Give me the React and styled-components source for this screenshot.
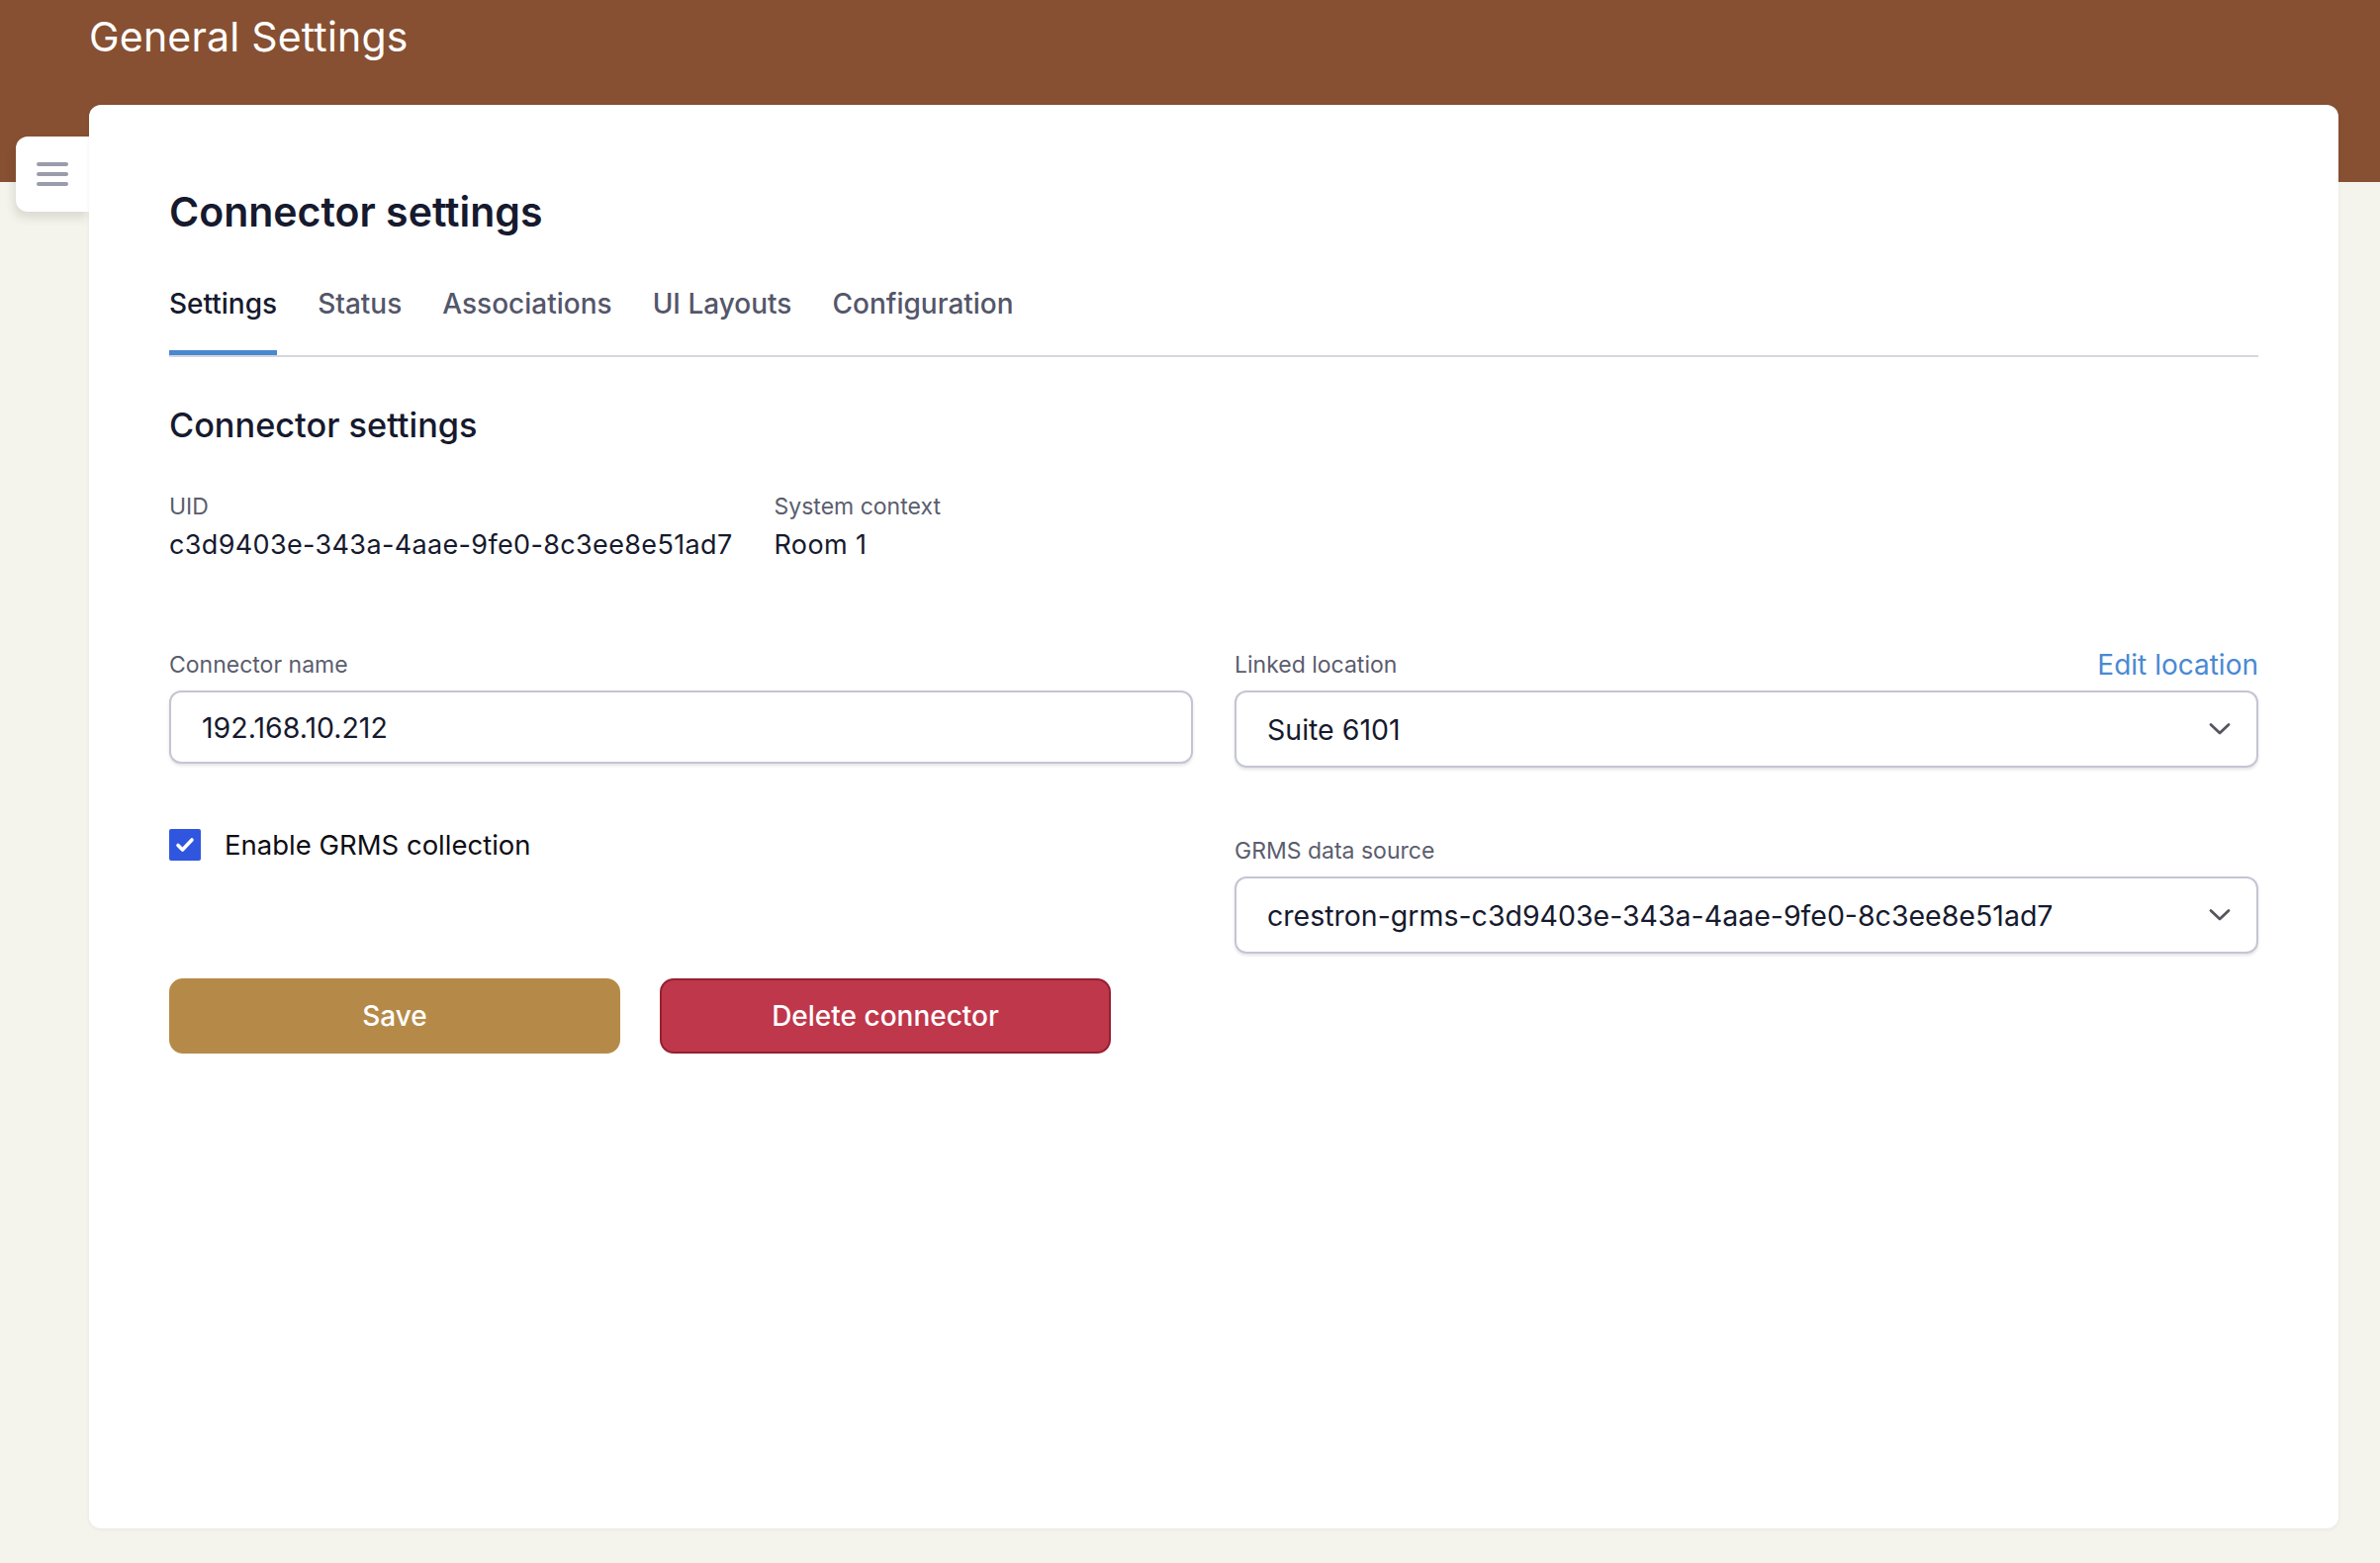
import React from 'react';
import styled, { createGlobalStyle } from 'styled-components';

const GlobalStyle = createGlobalStyle`
  * {
    box-sizing: border-box;
  }
  body {
    margin: 0;
    font-family: Inter, 'Noto Sans', 'Liberation Sans', sans-serif;
    background: #f4f4ec;
  }
`;

const Page = styled.div`
  min-height: 1580px;
  background: linear-gradient(to bottom, #875032 0, #875032 184px, #f4f4ec 184px);
`;

const TopBar = styled.header`
  height: 106px;
  padding: 13px 90px 0;
`;

const TopTitle = styled.h1`
  margin: 0;
  font-size: 41px;
  line-height: 49px;
  font-weight: 400;
  letter-spacing: 0.2px;
  color: #ffffff;
`;

const Shell = styled.div`
  display: flex;
  align-items: flex-start;
  padding: 0 42px 0 16px;
`;

const MenuToggle = styled.button`
  flex: none;
  width: 74px;
  height: 76px;
  margin-top: 32px;
  border: none;
  border-radius: 12px 0 0 12px;
  background: #ffffff;
  box-shadow: -2px 6px 10px rgba(40, 30, 20, 0.12);
  display: flex;
  flex-direction: column;
  align-items: center;
  justify-content: center;
  gap: 6px;
  padding: 0;
  span {
    display: block;
    width: 32px;
    height: 4px;
    border-radius: 2px;
    background: #9a9bab;
  }
`;

const Card = styled.main`
  flex: 1;
  height: 1439px;
  background: #ffffff;
  border-radius: 12px;
  box-shadow: 0 1px 4px rgba(40, 30, 20, 0.06);
  padding: 83px 81px;
`;

const PageTitle = styled.h2`
  margin: 0;
  font-size: 41px;
  line-height: 50px;
  font-weight: 600;
  color: #161a2e;
`;

const TabList = styled.nav`
  display: flex;
  gap: 41px;
  margin-top: 52px;
  border-bottom: 2px solid #d6d6e0;
`;

const Tab = styled.div`
  font-size: 28px;
  line-height: 33px;
  font-weight: 500;
  padding-bottom: 30px;
  color: ${({ active }) => (active ? '#161a2e' : '#54566a')};
  border-bottom: 5px solid ${({ active }) => (active ? '#4a88cf' : 'transparent')};
`;

const SectionTitle = styled.h3`
  margin: 48px 0 0;
  font-size: 34.3px;
  line-height: 41px;
  font-weight: 500;
  color: #161a2e;
`;

const MetaRow = styled.div`
  display: flex;
  gap: 42px;
  margin-top: 48px;
`;

const MetaItem = styled.div`
  display: flex;
  flex-direction: column;
`;

const Label = styled.span`
  font-size: 23px;
  line-height: 29px;
  color: #5b5d6e;
`;

const MetaValue = styled.span`
  margin-top: 7px;
  font-size: 27px;
  line-height: 33px;
  letter-spacing: 0.35px;
  color: #161a2e;
`;

const FormGrid = styled.div`
  display: grid;
  grid-template-columns: 1fr 1fr;
  column-gap: 42px;
  row-gap: 61px;
  margin-top: 91px;
  align-items: start;
`;

const Field = styled.div`
  display: flex;
  flex-direction: column;
  padding-top: ${({ offset }) => offset || 0}px;
`;

const FieldHead = styled.div`
  display: flex;
  justify-content: space-between;
  align-items: flex-end;
  height: 29px;
  margin-bottom: 11px;
`;

const EditLink = styled.a`
  font-size: 28px;
  line-height: 29px;
  color: #4a89d3;
  text-decoration: none;
  cursor: pointer;
`;

const TextInput = styled.input`
  height: 74px;
  width: 100%;
  padding: 0 31px;
  border: 2px solid #c4c5d3;
  border-radius: 12px;
  box-shadow: 0 2px 3px rgba(30, 30, 60, 0.12);
  font-family: Inter, 'Noto Sans', 'Liberation Sans', sans-serif;
  font-size: 28.5px;
  color: #161a2e;
  background: #ffffff;
  outline: none;
`;

const SelectBox = styled.div`
  height: 78px;
  display: flex;
  align-items: center;
  justify-content: space-between;
  padding: 0 26px 0 31px;
  border: 2px solid #c4c5d3;
  border-radius: 12px;
  box-shadow: 0 2px 3px rgba(30, 30, 60, 0.12);
  font-size: 28.5px;
  color: #161a2e;
  cursor: pointer;
  svg {
    flex: none;
  }
`;

const CheckRow = styled.label`
  display: flex;
  align-items: center;
  gap: 24px;
  font-size: 27.5px;
  line-height: 34px;
  color: #0e0e14;
`;

const CheckBox = styled.span`
  width: 32px;
  height: 32px;
  border-radius: 2px;
  background: #3056e0;
  display: flex;
  align-items: center;
  justify-content: center;
`;

const Actions = styled.div`
  display: flex;
  gap: 40px;
  margin-top: 25px;
`;

const ActionButton = styled.button`
  width: 456px;
  height: 76px;
  border-radius: 14px;
  font-family: Inter, 'Noto Sans', 'Liberation Sans', sans-serif;
  font-size: 28px;
  font-weight: 500;
  color: #ffffff;
  cursor: pointer;
  background: ${({ danger }) => (danger ? '#bf374b' : '#b58a48')};
  border: 2px solid ${({ danger }) => (danger ? '#93212f' : '#b58a48')};
`;

const Chevron = () => (
  <svg width="22" height="14" viewBox="0 0 22 14" fill="none">
    <path d="M2 2.5L11 11L20 2.5" stroke="#55565f" strokeWidth="2.8" strokeLinecap="round" strokeLinejoin="round" />
  </svg>
);

const tabs = ['Settings', 'Status', 'Associations', 'UI Layouts', 'Configuration'];
const uid = 'c3d9403e-343a-4aae-9fe0-8c3ee8e51ad7';

const App = () => {
  return (
    <Page>
      <GlobalStyle />
      <TopBar>
        <TopTitle>General Settings</TopTitle>
      </TopBar>
      <Shell>
        <MenuToggle aria-label="Menu">
          <span />
          <span />
          <span />
        </MenuToggle>
        <Card>
          <PageTitle>Connector settings</PageTitle>
          <TabList>
            {tabs.map((t, i) => (
              <Tab key={t} active={i === 0}>
                {t}
              </Tab>
            ))}
          </TabList>

          <SectionTitle>Connector settings</SectionTitle>
          <MetaRow>
            <MetaItem>
              <Label>UID</Label>
              <MetaValue>{uid}</MetaValue>
            </MetaItem>
            <MetaItem>
              <Label>System context</Label>
              <MetaValue>Room 1</MetaValue>
            </MetaItem>
          </MetaRow>

          <FormGrid>
            <Field>
              <FieldHead>
                <Label>Connector name</Label>
              </FieldHead>
              <TextInput defaultValue="192.168.10.212" />
            </Field>
            <Field>
              <FieldHead>
                <Label>Linked location</Label>
                <EditLink>Edit location</EditLink>
              </FieldHead>
              <SelectBox>
                <span>Suite 6101</span>
                <Chevron />
              </SelectBox>
            </Field>
            <CheckRow>
              <CheckBox>
                <svg width="20" height="16" viewBox="0 0 20 16" fill="none">
                  <path d="M3 8.5L7.5 13L17 3" stroke="#ffffff" strokeWidth="3.6" strokeLinecap="round" strokeLinejoin="round" />
                </svg>
              </CheckBox>
              Enable GRMS collection
            </CheckRow>
            <Field offset={9}>
              <FieldHead>
                <Label>GRMS data source</Label>
              </FieldHead>
              <SelectBox>
                <span>crestron-grms-{uid}</span>
                <Chevron />
              </SelectBox>
            </Field>
          </FormGrid>

          <Actions>
            <ActionButton>Save</ActionButton>
            <ActionButton danger>Delete connector</ActionButton>
          </Actions>
        </Card>
      </Shell>
    </Page>
  );
};

export default App;
